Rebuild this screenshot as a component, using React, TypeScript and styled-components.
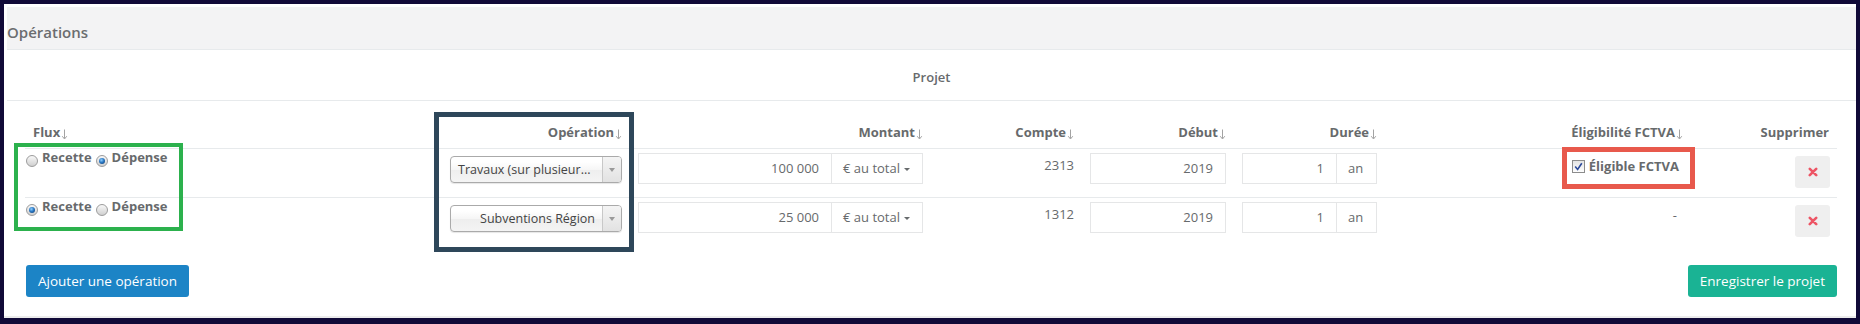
import React from 'react'
import styled, { createGlobalStyle } from 'styled-components'

const COLS = '417px 188px 301px 151px 152px 151px 306px 146px'

const GlobalStyle = createGlobalStyle`
  body {
    margin: 0;
    font-family: 'Open Sans', 'Liberation Sans', sans-serif;
    color: #676a6c;
    font-size: 13px;
  }
`

const SortArrow = () => (
  <ArrowSvg width="7" height="11" viewBox="0 0 7 11">
    <path d="M3.5 0.5 V9.5 M1.2 7.2 L3.5 10 L5.8 7.2" fill="none" stroke="#a3a3a3" strokeWidth="1" />
  </ArrowSvg>
)

const TimesIcon = () => (
  <svg width="10" height="10" viewBox="0 0 10 10">
    <path d="M1.8 1.8 L8.2 8.2 M8.2 1.8 L1.8 8.2" stroke="#ed5565" strokeWidth="2.6" strokeLinecap="round" />
  </svg>
)

const CheckMark = () => (
  <svg width="9" height="9" viewBox="0 0 9 9">
    <path d="M1.2 4.6 L3.6 7.4 L7.8 1.2" fill="none" stroke="#2c4a9a" strokeWidth="1.6" />
  </svg>
)

type Line = {
  flux: 'recette' | 'depense'
  operation: string
  opAlign: 'left' | 'right'
  montant: string
  compte: string
  debut: string
  duree: string
  fctva: boolean
}

const lines: Line[] = [
  {
    flux: 'depense',
    operation: 'Travaux (sur plusieur...',
    opAlign: 'left',
    montant: '100 000',
    compte: '2313',
    debut: '2019',
    duree: '1',
    fctva: true,
  },
  {
    flux: 'recette',
    operation: 'Subventions Région',
    opAlign: 'right',
    montant: '25 000',
    compte: '1312',
    debut: '2019',
    duree: '1',
    fctva: false,
  },
]

const App = () => {
  return (
    <Page>
      <GlobalStyle />
      <Panel>
        <Heading>Opérations</Heading>
        <ProjectTitle>Projet</ProjectTitle>
        <Body>
          <HeadRow>
            <Th $align="left">Flux<SortArrow /></Th>
            <Th $align="right">Opération<SortArrow /></Th>
            <Th $align="right">Montant<SortArrow /></Th>
            <Th $align="right">Compte<SortArrow /></Th>
            <Th $align="right">Début<SortArrow /></Th>
            <Th $align="right">Durée<SortArrow /></Th>
            <Th $align="right">Éligibilité FCTVA<SortArrow /></Th>
            <Th $align="right">Supprimer</Th>
          </HeadRow>
          {lines.map((l, i) => (
            <Row key={i}>
              <Td $pt={0}>
                <RadioGroup>
                  <RadioDot $checked={l.flux === 'recette'} />
                  <RadioText>Recette</RadioText>
                  <RadioDot $checked={l.flux === 'depense'} />
                  <RadioText>Dépense</RadioText>
                </RadioGroup>
              </Td>
              <Td $pt={7}>
                <Select>
                  <SelectValue $align={l.opAlign}>{l.operation}</SelectValue>
                  <SelectCaret>
                    <SmallTriangle />
                  </SelectCaret>
                </Select>
              </Td>
              <Td $pt={4}>
                <InputGroup>
                  <NumberInput>{l.montant}</NumberInput>
                  <Addon $width={91}>
                    € au total <Caret />
                  </Addon>
                </InputGroup>
              </Td>
              <Td $pt={7} $align="right">{l.compte}</Td>
              <Td $pt={4}>
                <NumberInput>{l.debut}</NumberInput>
              </Td>
              <Td $pt={4}>
                <InputGroup>
                  <NumberInput>{l.duree}</NumberInput>
                  <Addon $width={40}>an</Addon>
                </InputGroup>
              </Td>
              <Td $pt={8} $align="right">
                {l.fctva ? (
                  <CheckLabel>
                    <CheckBox>
                      <CheckMark />
                    </CheckBox>
                    Éligible FCTVA
                  </CheckLabel>
                ) : (
                  <Dash>-</Dash>
                )}
              </Td>
              <Td $pt={7} $align="right">
                <DeleteButton>
                  <TimesIcon />
                </DeleteButton>
              </Td>
            </Row>
          ))}
          <Footer>
            <Button $color="#1c84c6">Ajouter une opération</Button>
            <Button $color="#1ab394">Enregistrer le projet</Button>
          </Footer>
        </Body>
      </Panel>
      <Mark $left={14} $top={143} $w={169} $h={88} $size={4} $color="#2cb14d" />
      <Mark $left={434} $top={112} $w={200} $h={140} $size={5} $color="#2e475a" />
      <Mark $left={1562} $top={147} $w={133} $h={42} $size={5} $color="#e8594c" />
    </Page>
  )
}

const Page = styled.div`
  position: relative;
  box-sizing: border-box;
  height: 324px;
  padding: 4px 4px 6px 4px;
  background: #110a38;
`

const Panel = styled.div`
  box-sizing: border-box;
  height: 100%;
  padding: 3px 0 0 3px;
  background: #fff;
  border-bottom: 2px solid #ececec;
`

const Heading = styled.div`
  height: 43px;
  padding-top: 15px;
  box-sizing: border-box;
  background: #f3f3f4;
  border-bottom: 1px solid #e7eaec;
  font-size: 15px;
  font-weight: 600;
  line-height: 20px;
  color: #6b6d6f;
`

const ProjectTitle = styled.div`
  height: 51px;
  box-sizing: border-box;
  padding-top: 18px;
  border-bottom: 1px solid #e7eaec;
  text-align: center;
  font-weight: 600;
  line-height: 18px;
`

const Body = styled.div`
  padding: 0 19px 0 18px;
`

const HeadRow = styled.div`
  display: grid;
  grid-template-columns: ${COLS};
  height: 48px;
  box-sizing: border-box;
  align-items: end;
  border-bottom: 1px solid #e7eaec;
`

const Th = styled.div<{ $align: 'left' | 'right' }>`
  padding: 0 8px 7px;
  font-weight: 700;
  line-height: 18px;
  text-align: ${(p) => p.$align};
  white-space: nowrap;
`

const ArrowSvg = styled.svg`
  vertical-align: -3px;
  margin-left: 1px;
`

const Row = styled.div`
  display: grid;
  grid-template-columns: ${COLS};
  height: 48px;
  & + & {
    height: 49px;
    border-top: 1px solid #e7eaec;
  }
`

const Td = styled.div<{ $pt: number; $align?: 'left' | 'right' }>`
  padding: ${(p) => p.$pt}px 8px 0;
  line-height: 18px;
  text-align: ${(p) => p.$align || 'left'};
`

const RadioGroup = styled.div`
  display: flex;
  align-items: flex-start;
  margin-left: -7px;
  font-weight: 700;
  line-height: 17px;
`

const RadioDot = styled.span<{ $checked: boolean }>`
  position: relative;
  box-sizing: border-box;
  width: 12px;
  height: 12px;
  margin-top: 6px;
  border-radius: 50%;
  border: 1px solid #9c9c9c;
  background: linear-gradient(#f8f8f8, #d0d0d0);
  &::after {
    content: '';
    display: ${(p) => (p.$checked ? 'block' : 'none')};
    position: absolute;
    left: 2px;
    top: 2px;
    width: 6px;
    height: 6px;
    border-radius: 50%;
    background: radial-gradient(circle at 40% 35%, #8fd0ff 0, #2a78c4 45%, #0d3466 100%);
  }
`

const RadioText = styled.span`
  margin: 0 4px 0 4px;
`

const Select = styled.div`
  display: flex;
  box-sizing: border-box;
  height: 27px;
  border: 1px solid #aaa;
  border-radius: 4px;
  background: linear-gradient(#ffffff 20%, #f6f6f6 50%, #eeeeee 52%, #f4f4f4 100%);
  box-shadow: 0 1px 1px rgba(0, 0, 0, 0.1);
  color: #444;
  font-size: 12.5px;
  overflow: hidden;
`

const SelectValue = styled.div<{ $align: 'left' | 'right' }>`
  flex: 1;
  padding: 0 7px;
  line-height: 25px;
  text-align: ${(p) => p.$align};
  white-space: nowrap;
  overflow: hidden;
`

const SelectCaret = styled.div`
  display: flex;
  align-items: center;
  justify-content: center;
  width: 18px;
  border-left: 1px solid #c8c8c8;
  background: linear-gradient(#f4f4f4, #e2e2e2);
`

const SmallTriangle = styled.span`
  width: 0;
  height: 0;
  border-left: 3px solid transparent;
  border-right: 3px solid transparent;
  border-top: 4px solid #9a9a9a;
`

const InputGroup = styled.div`
  display: flex;
`

const NumberInput = styled.div`
  flex: 1;
  box-sizing: border-box;
  height: 31px;
  padding: 0 12px;
  border: 1px solid #e5e6e7;
  line-height: 29px;
  text-align: right;
`

const Addon = styled.div<{ $width: number }>`
  box-sizing: border-box;
  width: ${(p) => p.$width}px;
  height: 31px;
  padding: 0 11px;
  border: 1px solid #e5e6e7;
  border-left: none;
  line-height: 29px;
  white-space: nowrap;
`

const Caret = styled.span`
  display: inline-block;
  vertical-align: middle;
  margin-left: 1px;
  border-left: 3px solid transparent;
  border-right: 3px solid transparent;
  border-top: 3px solid #676a6c;
`

const CheckLabel = styled.div`
  display: inline-flex;
  align-items: center;
  gap: 4px;
  margin-right: 4px;
  font-weight: 700;
`

const CheckBox = styled.span`
  display: flex;
  align-items: center;
  justify-content: center;
  box-sizing: border-box;
  width: 13px;
  height: 13px;
  margin-top: 1px;
  border: 1px solid #8c8c8c;
  background: linear-gradient(#e4e4e4, #fdfdfd);
`

const Dash = styled.span`
  margin-right: 6px;
`

const DeleteButton = styled.div`
  display: inline-flex;
  align-items: center;
  justify-content: center;
  width: 35px;
  height: 32px;
  margin-right: -1px;
  border-radius: 3px;
  background: #efefef;
`

const Footer = styled.div`
  display: flex;
  justify-content: space-between;
  margin-top: 18px;
  padding-left: 1px;
`

const Button = styled.div<{ $color: string }>`
  height: 32px;
  padding: 0 12px;
  border-radius: 3px;
  background: ${(p) => p.$color};
  color: #fff;
  font-size: 13.5px;
  line-height: 32px;
`

const Mark = styled.div<{ $left: number; $top: number; $w: number; $h: number; $size: number; $color: string }>`
  position: absolute;
  box-sizing: border-box;
  left: ${(p) => p.$left}px;
  top: ${(p) => p.$top}px;
  width: ${(p) => p.$w}px;
  height: ${(p) => p.$h}px;
  border: ${(p) => p.$size}px solid ${(p) => p.$color};
  pointer-events: none;
`

export default App
